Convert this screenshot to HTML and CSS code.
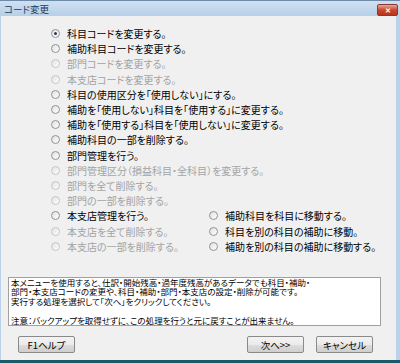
FILE: index.html
```html
<!DOCTYPE html>
<html lang="ja">
<head>
    <meta charset="UTF-8">
    <title>コード変更</title>
    <link rel="stylesheet" href="styles.css">
</head>
<body>
    <div class="window">
        <div class="titlebar">
            <span class="title">コード変更</span>
            <span class="close-btn">✕</span>
        </div>
        <div class="content">
            <div class="options">
                <label class="option"><span class="radio checked"></span>科目コードを変更する。</label>
                <label class="option"><span class="radio"></span>補助科目コードを変更する。</label>
                <label class="option disabled"><span class="radio"></span>部門コードを変更する。</label>
                <label class="option disabled"><span class="radio"></span>本支店コードを変更する。</label>
                <label class="option"><span class="radio"></span>科目の使用区分を「使用しない」にする。</label>
                <label class="option"><span class="radio"></span>補助を「使用しない」科目を「使用する」に変更する。</label>
                <label class="option"><span class="radio"></span>補助を「使用する」科目を「使用しない」に変更する。</label>
                <label class="option"><span class="radio"></span>補助科目の一部を削除する。</label>
                <label class="option"><span class="radio"></span>部門管理を行う。</label>
                <label class="option disabled"><span class="radio"></span>部門管理区分（損益科目・全科目）を変更する。</label>
                <label class="option disabled"><span class="radio"></span>部門を全て削除する。</label>
                <label class="option disabled"><span class="radio"></span>部門の一部を削除する。</label>
                <label class="option"><span class="radio"></span>本支店管理を行う。</label>
                <label class="option disabled"><span class="radio"></span>本支店を全て削除する。</label>
                <label class="option disabled"><span class="radio"></span>本支店の一部を削除する。</label>
                <label class="option right r13"><span class="radio"></span>補助科目を科目に移動する。</label>
                <label class="option right r14"><span class="radio"></span>科目を別の科目の補助に移動。</label>
                <label class="option right r15"><span class="radio"></span>補助を別の科目の補助に移動する。</label>
            </div>
            <div class="message">
                本メニューを使用すると、仕訳・開始残高・過年度残高があるデータでも科目・補助・<br>
                部門・本支店コードの変更や、科目・補助・部門・本支店の設定・削除が可能です。<br>
                実行する処理を選択して「次へ」をクリックしてください。<br>
                <br>
                注意：バックアップを取得せずに、この処理を行うと元に戻すことが出来ません。
            </div>
            <div class="buttons">
                <button class="btn">F1ヘルプ</button>
                <span class="spacer"></span>
                <button class="btn">次へ&gt;&gt;</button>
                <button class="btn">キャンセル</button>
            </div>
        </div>
    </div>
</body>
</html>
```

FILE: styles.css
```css
body {
    margin: 0;
    padding: 0;
    background: #1c5a68;
    font-family: "Noto Sans CJK JP", sans-serif;
    font-feature-settings: "palt";
}
.window {
    width: 400px;
    height: 360px;
    display: flex;
    flex-direction: column;
    background: #b9d1ea;
    box-sizing: border-box;
    border-top: 1px solid #6f8aa6;
}
.titlebar {
    height: 15px;
    display: flex;
    align-items: center;
    justify-content: space-between;
    padding: 0 2px 0 4px;
    background: linear-gradient(to bottom, #cfe0f2, #b7cfe8);
}
.title {
    font-size: 9.5px;
    color: #1e395b;
}
.close-btn {
    width: 19px;
    height: 10px;
    margin-top: 2px;
    border-radius: 2px;
    border: 1px solid #8a3a2c;
    background: linear-gradient(to bottom, #e9a99c, #c7472f 50%, #b9331e);
    color: #fff;
    font-size: 7px;
    line-height: 10px;
    text-align: center;
    font-weight: bold;
}
.content {
    flex: 1;
    margin: 0 4px 0 1px;
    background: #f0f0f0;
    display: flex;
    flex-direction: column;
    padding: 10px 15px 0 7px;
}
.options {
    display: grid;
    grid-template-columns: 158px 1fr;
    grid-auto-rows: 15.2px;
    padding-left: 43px;
}
.option {
    grid-column: 1;
    display: flex;
    align-items: center;
    font-size: 10px;
    color: #000;
    white-space: nowrap;
}
.option.disabled {
    color: #a3a3a3;
}
.option.right {
    grid-column: 2;
}
.r13 { grid-row: 13; }
.r14 { grid-row: 14; }
.r15 { grid-row: 15; }
.radio {
    width: 7px;
    height: 7px;
    border-radius: 50%;
    border: 1px solid #8f9399;
    background: linear-gradient(to bottom right, #e2e2e2, #fdfdfd);
    margin-right: 7px;
    flex: none;
    position: relative;
}
.disabled .radio {
    border-color: #c4c6c9;
}
.radio.checked::after {
    content: '';
    position: absolute;
    top: 2px;
    left: 2px;
    width: 3px;
    height: 3px;
    border-radius: 50%;
    background: #2b3b4f;
}
.message {
    margin-top: 23px;
    background: #fff;
    border: 1px solid #a0a0a0;
    font-size: 8.5px;
    line-height: 9.5px;
    padding: 0 2px;
    white-space: nowrap;
}
.buttons {
    display: flex;
    gap: 12px;
    margin-top: 10px;
    padding: 0 8px 0 10px;
}
.spacer {
    flex: 1;
}
.btn {
    width: 57px;
    height: 17px;
    padding: 0;
    font-family: inherit;
    font-feature-settings: "palt";
    font-size: 9.5px;
    color: #000;
    border: 1px solid #8a8a8a;
    border-radius: 2px;
    background: linear-gradient(to bottom, #f3f3f3, #ebebeb 50%, #dddddd 51%, #cfcfcf);
}
```
